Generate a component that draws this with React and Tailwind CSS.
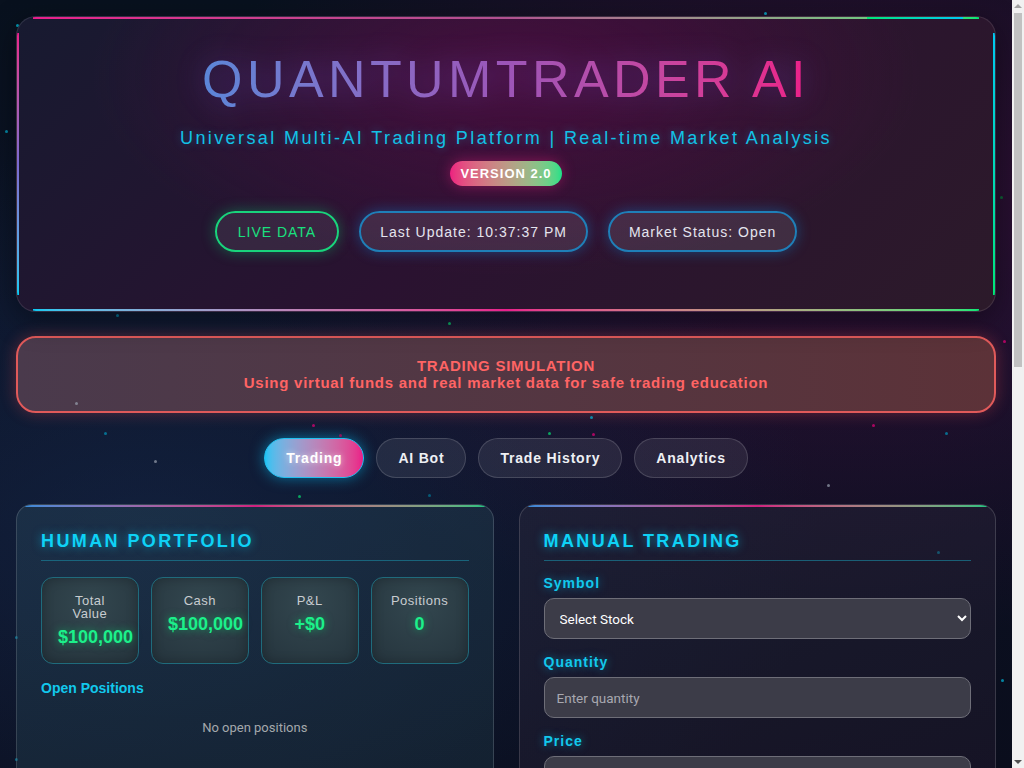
const dots = [
  [16, 24, "bg-cyan-400"], [72, 30, "bg-pink-500"], [128, 24, "bg-cyan-500"], [296, 24, "bg-pink-600"],
  [408, 24, "bg-pink-700"], [764, 12, "bg-cyan-400"], [976, 24, "bg-pink-600"], [5, 130, "bg-cyan-500"],
  [34, 300, "bg-green-500"], [116, 314, "bg-cyan-600"], [448, 322, "bg-green-400"], [1000, 196, "bg-green-700"],
  [312, 424, "bg-pink-600"], [104, 432, "bg-cyan-600"], [298, 495, "bg-green-400"], [428, 494, "bg-cyan-700"],
  [590, 416, "bg-cyan-500"], [592, 433, "bg-pink-600"], [548, 432, "bg-green-400"], [872, 424, "bg-pink-600"],
  [945, 432, "bg-cyan-600"], [1003, 340, "bg-pink-600"], [339, 434, "bg-pink-700"], [937, 551, "bg-cyan-500"],
  [1001, 679, "bg-cyan-500"], [75, 402, "bg-gray-400"], [154, 460, "bg-gray-400"], [827, 484, "bg-gray-400"],
  [15, 636, "bg-cyan-600"], [15, 758, "bg-cyan-600"], [812, 766, "bg-green-500"], [646, 766, "bg-pink-600"],
];

function Stat({ label, value }) {
  return (
    <div className="h-[87px] rounded-xl border border-[#1f6b7c] bg-[radial-gradient(circle_at_50%_30%,#33474f,#25343d)] px-4 pt-[16px] text-center shadow-[inset_0_0_12px_rgba(0,0,0,0.25)]">
      <div className="text-[13px] leading-[13px] tracking-[0.5px] text-[#c8ccd0]">{label}</div>
      <div className="mt-[6px] whitespace-nowrap text-lg font-bold leading-[22px] text-[#1cf08a] [text-shadow:0_0_8px_rgba(0,230,118,0.55)]">
        {value}
      </div>
    </div>
  );
}

function Field({ label, children }) {
  return (
    <div className="mb-[15px]">
      <div className="mb-[6px] text-sm font-bold leading-[17px] tracking-[1px] text-[#12c8ec] [text-shadow:0_0_8px_rgba(0,200,255,0.5)]">
        {label}
      </div>
      {children}
    </div>
  );
}

const fieldCls =
  "h-[41px] w-full rounded-[10px] border border-[#6e6e78] bg-[#3c3c48] font-['Roboto',sans-serif] text-[13.5px] text-white placeholder:text-[#a8a8b0]";

export default function App() {
  const tabs = ["Trading", "AI Bot", "Trade History", "Analytics"];
  return (
    <div className="flex h-screen bg-[#0a0f1e] font-['Liberation_Sans',Arial,sans-serif] text-white">
      <div className="flex-1 overflow-y-auto bg-[radial-gradient(ellipse_at_15%_70%,rgba(30,60,110,0.35),transparent_55%),radial-gradient(ellipse_at_85%_25%,rgba(90,10,70,0.45),transparent_55%),linear-gradient(180deg,#08111e,#0c1326_40%,#0a0d1c)] [scrollbar-width:none]">
        <div className="relative px-4 pt-4 pb-10">
          {dots.map(([x, y, c], i) => (
            <span key={i} className={`pointer-events-none absolute h-[3px] w-[3px] rounded-full opacity-70 ${c}`} style={{ left: x, top: y }} />
          ))}

          {/* header */}
          <div className="relative overflow-hidden rounded-[20px] border border-white/10 bg-[radial-gradient(ellipse_at_50%_20%,rgba(100,10,75,0.5),transparent_60%),linear-gradient(135deg,#171a30,#2a1230_50%,#2c1a2a)] px-8 pt-8 pb-[59px] text-center shadow-[0_8px_30px_rgba(0,0,0,0.4)]">
            <span className="absolute left-4 right-4 top-0 h-[2px] bg-linear-to-r from-[#e91e8c] via-[#b05090] to-[#00e676]" />
            <span className="absolute right-8 top-0 h-[2px] w-24 bg-linear-to-r from-[#00e676] to-[#00c8f0]" />
            <span className="absolute left-0 top-4 bottom-4 w-[2px] bg-linear-to-b from-[#e91e8c] via-[#7a6ad0] to-[#00c8f0]" />
            <span className="absolute right-0 top-4 bottom-4 w-[2px] bg-linear-to-b from-[#00c8f0] to-[#00e676]" />
            <span className="absolute bottom-0 left-4 right-4 h-[2px] bg-linear-to-r from-[#00c8f0] via-[#e91e8c] to-[#00e676]" />

            <h1 className="inline-block bg-linear-to-r from-[#5a86d8] via-[#9c55b8] to-[#ec1e88] bg-clip-text text-[52px] font-normal leading-[60px] tracking-[4.4px] text-transparent drop-shadow-[0_0_14px_rgba(120,80,220,0.45)]">
              QUANTUMTRADER AI
            </h1>
            <p className="mt-[16px] text-lg leading-[26px] tracking-[2.4px] text-[#12c2e6] [text-shadow:0_0_8px_rgba(0,200,255,0.35)]">
              Universal Multi-AI Trading Platform | Real-time Market Analysis
            </p>
            <div className="mt-[10px] flex justify-center">
              <span className="rounded-full bg-linear-to-r from-[#ec1e80] to-[#18e088] px-[10px] py-[5px] text-[13px] font-bold leading-[15px] tracking-[1px] text-white shadow-[0_0_14px_rgba(236,30,128,0.45)]">
                VERSION 2.0
              </span>
            </div>
            <div className="mt-[25px] flex justify-center gap-5">
              <div className="flex h-[41px] items-center rounded-full border-2 border-[#19d47c] bg-white/[0.08] px-[21px] text-sm tracking-[1px] text-[#19e07f] shadow-[0_0_14px_rgba(0,230,118,0.35)]">
                LIVE DATA
              </div>
              <div className="flex h-[41px] items-center rounded-full border-2 border-[#1f7fb8] bg-white/[0.1] px-[19px] text-sm tracking-[1px] text-[#e4e4ee] shadow-[0_0_14px_rgba(0,160,255,0.35)]">
                Last Update: 10:37:37 PM
              </div>
              <div className="flex h-[41px] items-center rounded-full border-2 border-[#1f7fb8] bg-white/[0.1] px-[19px] text-sm tracking-[1px] text-[#e4e4ee] shadow-[0_0_14px_rgba(0,160,255,0.35)]">
                Market Status: Open
              </div>
            </div>
          </div>

          {/* simulation banner */}
          <div className="mt-[24px] flex h-[77px] flex-col items-center justify-center rounded-[20px] border-2 border-[#e05a5a] bg-linear-to-r from-[#4a3a4c] to-[#5c3238] pb-[2px] text-[15px] font-bold leading-[17px] tracking-[0.75px] text-[#ff6464] shadow-[0_0_16px_rgba(255,80,80,0.3)]">
            <div>TRADING SIMULATION</div>
            <div>Using virtual funds and real market data for safe trading education</div>
          </div>

          {/* tabs */}
          <div className="mt-[25px] flex justify-center gap-3">
            {tabs.map((t, i) => (
              <button
                key={t}
                className={
                  i === 0
                    ? "h-10 rounded-full border border-[#20c0f0] bg-linear-to-r from-[#18c4f4] to-[#ea1a88] px-[21px] text-sm font-bold tracking-[0.8px] text-white shadow-[0_0_14px_rgba(0,200,255,0.5)] [text-shadow:0_0_6px_rgba(255,255,255,0.6)]"
                    : "h-10 rounded-full border border-white/15 bg-white/[0.08] px-[21px] text-sm font-bold tracking-[0.8px] text-[#eef0f4]"
                }
              >
                {t}
              </button>
            ))}
          </div>

          {/* panels */}
          <div className="mt-[26px] grid grid-cols-2 gap-[25px]">
            <div className="relative overflow-hidden rounded-2xl border border-white/15 bg-[linear-gradient(160deg,rgba(40,70,90,0.45),rgba(25,45,55,0.45))] px-6 pt-[25px] pb-10">
              <span className="absolute left-2 right-2 top-0 h-[2px] bg-linear-to-r from-[#3a8ad8] via-[#d02080] to-[#20c080]" />
              <h2 className="border-b border-[#1a7d95]/70 pb-[8px] text-lg font-bold leading-[22px] tracking-[2.4px] text-[#0ed2f6] [text-shadow:0_0_10px_rgba(0,210,255,0.6)]">
                HUMAN PORTFOLIO
              </h2>
              <div className="mt-[16px] grid grid-cols-4 gap-3">
                <Stat label="Total Value" value="$100,000" />
                <Stat label="Cash" value="$100,000" />
                <Stat label="P&L" value="+$0" />
                <Stat label="Positions" value="0" />
              </div>
              <h3 className="mt-[16px] text-sm font-bold leading-[17px] text-[#12c8ec]">Open Positions</h3>
              <p className="mt-[21px] text-center font-['Roboto',sans-serif] text-[13px] text-[#a4a8ac]">No open positions</p>
              <div className="mt-10 h-40" />
            </div>

            <div className="relative overflow-hidden rounded-2xl border border-white/15 bg-[linear-gradient(160deg,rgba(40,40,60,0.5),rgba(30,20,40,0.5))] px-6 pt-[25px] pb-8">
              <span className="absolute left-2 right-2 top-0 h-[2px] bg-linear-to-r from-[#3a8ad8] via-[#d02080] to-[#20c080]" />
              <h2 className="mb-[14px] border-b border-[#1a7d95]/70 pb-[8px] text-lg font-bold leading-[22px] tracking-[2.4px] text-[#0ed2f6] [text-shadow:0_0_10px_rgba(0,210,255,0.6)]">
                MANUAL TRADING
              </h2>
              <Field label="Symbol">
                <select className={`${fieldCls} px-[11px]`}>
                  <option>Select Stock</option>
                </select>
              </Field>
              <Field label="Quantity">
                <input placeholder="Enter quantity" className={`${fieldCls} px-3`} />
              </Field>
              <Field label="Price">
                <input placeholder="Market price" className={`${fieldCls} px-3`} />
              </Field>
              <div className="mt-5 grid grid-cols-2 gap-3">
                <button className="h-11 rounded-full bg-[#18c878] text-sm font-bold tracking-[1px]">BUY</button>
                <button className="h-11 rounded-full bg-[#e04060] text-sm font-bold tracking-[1px]">SELL</button>
              </div>
            </div>
          </div>
        </div>
      </div>

      {/* scrollbar */}
      <div className="flex w-[12px] shrink-0 flex-col bg-[#f1f1f1]">
        <div className="flex h-[12px] items-center justify-center">
          <span className="h-0 w-0 border-x-[4px] border-b-[4px] border-x-transparent border-b-[#a3a3a3]" />
        </div>
        <div className="mx-[2px] mt-[1px] h-[354px] bg-[#c1c1c1]" />
        <div className="flex-1" />
        <div className="flex h-[12px] items-center justify-center">
          <span className="h-0 w-0 border-x-[4px] border-t-[4px] border-x-transparent border-t-[#505050]" />
        </div>
      </div>
    </div>
  );
}
